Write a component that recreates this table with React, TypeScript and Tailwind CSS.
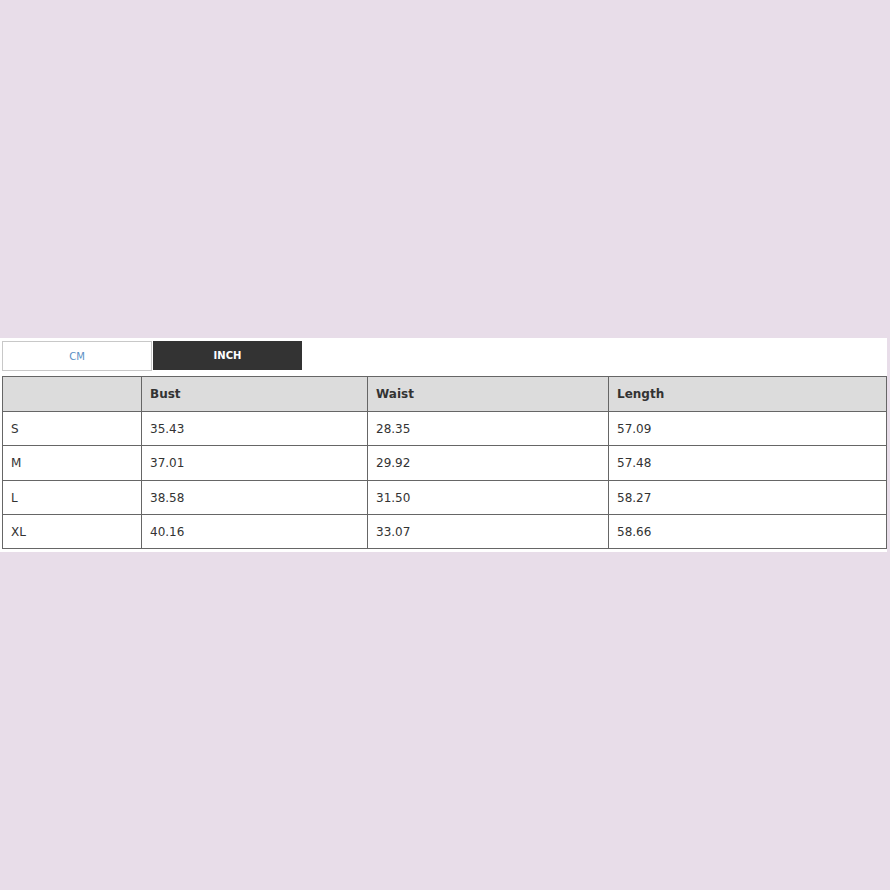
import React from 'react';

const rows = [
  { cells: ['S', '35.43', '28.35', '57.09'], h: 'h-[34px]' },
  { cells: ['M', '37.01', '29.92', '57.48'], h: 'h-[35px]' },
  { cells: ['L', '38.58', '31.50', '58.27'], h: 'h-[34px]' },
  { cells: ['XL', '40.16', '33.07', '58.66'], h: 'h-[34px]' },
];

export default function App() {
  return (
    <div className="w-[890px] h-[890px] bg-[#e8dde9] flex flex-col pt-[338px]" style={{ fontFamily: '"DejaVu Sans", Verdana, sans-serif' }}>
      <div className="w-[887px] h-[214px] bg-white pl-[2px] pt-[3px]">
        <div className="flex">
          <div className="w-[150px] h-[30px] border border-[#c8c8c8] flex items-center justify-center text-[10px] text-[#5b8fc4]">CM</div>
          <div className="w-[149px] h-[29px] ml-[1px] bg-[#333333] flex items-center justify-center text-[10px] font-bold text-white">INCH</div>
        </div>
        <table className="mt-[5px] w-[885px] border-collapse text-[12px] text-[#333]">
          <colgroup>
            <col className="w-[139px]" />
            <col className="w-[226px]" />
            <col className="w-[241px]" />
            <col />
          </colgroup>
          <thead>
            <tr className="h-[35px] bg-[#dcdcdc]">
              <th className="border border-[#666] text-left pl-2 font-bold"></th>
              <th className="border border-[#666] text-left pl-2 font-bold">Bust</th>
              <th className="border border-[#666] text-left pl-2 font-bold">Waist</th>
              <th className="border border-[#666] text-left pl-2 font-bold">Length</th>
            </tr>
          </thead>
          <tbody>
            {rows.map(r => (
              <tr key={r.cells[0]} className={r.h}>
                {r.cells.map((c, i) => (
                  <td key={i} className="border border-[#666] pl-2">{c}</td>
                ))}
              </tr>
            ))}
          </tbody>
        </table>
      </div>
    </div>
  );
}
